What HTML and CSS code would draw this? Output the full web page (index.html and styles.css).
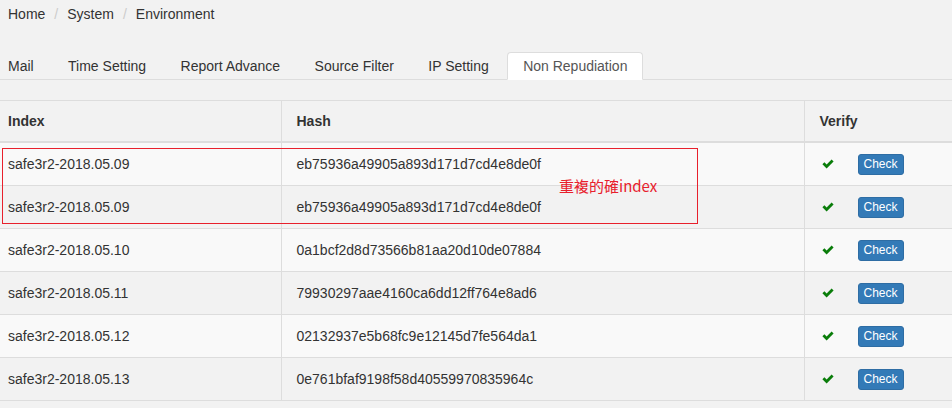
FILE: index.html
```html
<!DOCTYPE html>
<html>
<head>
<meta charset="utf-8">
<link rel="stylesheet" href="styles.css">
</head>
<body>
<div class="breadcrumb">
  <span class="crumb">Home</span><span class="sep">/</span><span class="crumb">System</span><span class="sep">/</span><span class="crumb">Environment</span>
</div>
<ul class="tabs">
  <li class="tab first">Mail</li>
  <li class="tab">Time Setting</li>
  <li class="tab">Report Advance</li>
  <li class="tab">Source Filter</li>
  <li class="tab">IP Setting</li>
  <li class="tab active">Non Repudiation</li>
</ul>
<div class="table-wrap">
  <table class="grid">
    <colgroup><col class="c1"><col class="c2"><col class="c3"></colgroup>
    <thead>
      <tr><th>Index</th><th>Hash</th><th>Verify</th></tr>
    </thead>
    <tbody>
      <tr><td>safe3r2-2018.05.09</td><td>eb75936a49905a893d171d7cd4e8de0f</td><td><div class="verify"><svg class="ok" width="12" height="10" viewBox="0 0 12 10"><path d="M0.4 5.2 L2.4 3.3 L4.6 5.5 L9.6 0.5 L11.6 2.4 L4.6 9.4 Z" fill="#0a7d0a"/></svg><span class="btn">Check</span></div></td></tr>
      <tr><td>safe3r2-2018.05.09</td><td>eb75936a49905a893d171d7cd4e8de0f</td><td><div class="verify"><svg class="ok" width="12" height="10" viewBox="0 0 12 10"><path d="M0.4 5.2 L2.4 3.3 L4.6 5.5 L9.6 0.5 L11.6 2.4 L4.6 9.4 Z" fill="#0a7d0a"/></svg><span class="btn">Check</span></div></td></tr>
      <tr><td>safe3r2-2018.05.10</td><td>0a1bcf2d8d73566b81aa20d10de07884</td><td><div class="verify"><svg class="ok" width="12" height="10" viewBox="0 0 12 10"><path d="M0.4 5.2 L2.4 3.3 L4.6 5.5 L9.6 0.5 L11.6 2.4 L4.6 9.4 Z" fill="#0a7d0a"/></svg><span class="btn">Check</span></div></td></tr>
      <tr><td>safe3r2-2018.05.11</td><td>79930297aae4160ca6dd12ff764e8ad6</td><td><div class="verify"><svg class="ok" width="12" height="10" viewBox="0 0 12 10"><path d="M0.4 5.2 L2.4 3.3 L4.6 5.5 L9.6 0.5 L11.6 2.4 L4.6 9.4 Z" fill="#0a7d0a"/></svg><span class="btn">Check</span></div></td></tr>
      <tr><td>safe3r2-2018.05.12</td><td>02132937e5b68fc9e12145d7fe564da1</td><td><div class="verify"><svg class="ok" width="12" height="10" viewBox="0 0 12 10"><path d="M0.4 5.2 L2.4 3.3 L4.6 5.5 L9.6 0.5 L11.6 2.4 L4.6 9.4 Z" fill="#0a7d0a"/></svg><span class="btn">Check</span></div></td></tr>
      <tr><td>safe3r2-2018.05.13</td><td>0e761bfaf9198f58d40559970835964c</td><td><div class="verify"><svg class="ok" width="12" height="10" viewBox="0 0 12 10"><path d="M0.4 5.2 L2.4 3.3 L4.6 5.5 L9.6 0.5 L11.6 2.4 L4.6 9.4 Z" fill="#0a7d0a"/></svg><span class="btn">Check</span></div></td></tr>
    </tbody>
  </table>
  <div class="note">
    <span class="note-text">重複的確index</span>
  </div>
</div>
</body>
</html>
```
FILE: styles.css
```css
html, body {
  margin: 0;
  padding: 0;
  background: #f2f2f2;
}
body {
  font-family: "Liberation Sans", Arial, sans-serif;
  font-size: 14px;
  line-height: 20px;
  color: #333;
  overflow: hidden;
}
.breadcrumb {
  display: flex;
  padding: 4px 8px 0;
  height: 20px;
}
.crumb { color: #333; }
.sep {
  color: #ccc;
  padding: 0 9px;
}
.tabs {
  list-style: none;
  margin: 28px 0 0;
  padding: 0;
  display: flex;
  border-bottom: 1px solid #ddd;
}
.tab {
  margin: 0 2.4px -1px 0;
  padding: 3px 15px 3px;
  border: 1px solid transparent;
  border-radius: 4px 4px 0 0;
  color: #333;
}
.tab.first { padding-left: 7px; }
.tab.active {
  background: #fff;
  border-color: #ddd;
  border-bottom-color: #fff;
  color: #555;
}
.table-wrap {
  position: relative;
  margin-top: 20px;
}
.grid {
  width: 952px;
  border-collapse: collapse;
  table-layout: fixed;
  border-top: 1px solid #ddd;
}
.c1 { width: 281px; }
.c2 { width: 523px; }
.c3 { width: 148px; }
.grid th {
  text-align: left;
  font-weight: bold;
  padding: 10px 15px;
  border-bottom: 2px solid #ddd;
}
.grid td {
  padding: 11px 15px 11px;
  border-bottom: 1px solid #ddd;
}
.grid th + th, .grid td + td {
  border-left: 1px solid #ddd;
}
.grid th:first-child, .grid td:first-child {
  padding-left: 8px;
}
.grid tbody tr:nth-child(odd) { background: #f9f9f9; }
.grid tbody tr:nth-child(even) { background: #f2f2f2; }
.verify {
  display: flex;
  align-items: center;
  height: 20px;
  padding-left: 2px;
}
.ok { display: block; }
.btn {
  margin-left: 24px;
  display: inline-block;
  background: #337ab7;
  border: 1px solid #2e6da4;
  border-radius: 3px;
  color: #fff;
  font-size: 12px;
  line-height: 17px;
  padding: 1px 5px;
}
.note {
  position: absolute;
  left: 2px;
  top: 48px;
  width: 694px;
  height: 74px;
  border: 1px solid #e8202c;
}
.note-text {
  position: absolute;
  left: 556px;
  top: 27px;
  font-family: "Noto Sans CJK TC", "Noto Sans CJK SC", sans-serif;
  font-size: 15px;
  line-height: 20px;
  color: #e8202c;
}
```
